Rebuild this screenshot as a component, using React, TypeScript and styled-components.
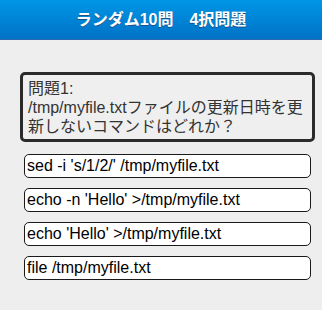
import { FC } from "react";
import styled, { createGlobalStyle } from "styled-components";

const GlobalStyle = createGlobalStyle`
  html, body {
    margin: 0;
    padding: 0;
    background: #eeeeee;
    font-family: "Liberation Sans", Arial, "Noto Sans CJK JP", sans-serif;
  }
`;

const choices = [
  "sed -i 's/1/2/' /tmp/myfile.txt",
  "echo -n 'Hello' >/tmp/myfile.txt",
  "echo 'Hello' >/tmp/myfile.txt",
  "file /tmp/myfile.txt",
];

const App: FC = () => {
  return (
    <Page>
      <GlobalStyle />
      <Header>
        <Title>ランダム10問　4択問題</Title>
      </Header>
      <Content>
        <Question>
          問題1:
          <br />
          /tmp/myfile.txtファイルの更新日時を更新しないコマンドはどれか？
        </Question>
        <ChoiceList>
          {choices.map((c) => (
            <Choice key={c}>{c}</Choice>
          ))}
        </ChoiceList>
      </Content>
    </Page>
  );
};

export default App;

const Page = styled.div`
  width: 322px;
  min-height: 310px;
  background: #eeeeee;
`;

const Header = styled.div`
  height: 39px;
  background: linear-gradient(#0096e6, #0072c6);
  border-bottom: 1px solid #2a6ab0;
  display: flex;
  align-items: center;
  justify-content: center;
`;

const Title = styled.h1`
  margin: 0;
  padding-bottom: 4px;
  font-size: 16px;
  font-weight: bold;
  color: #ffffff;
  text-shadow: 0 1px 0 #1d4f86;
`;

const Content = styled.div`
  padding: 32px 7px 0 20px;
`;

const Question = styled.div`
  border: 3px solid #2b2b2b;
  border-radius: 5px;
  background: #efefef;
  padding: 4px 8px 3px 5px;
  font-size: 16px;
  line-height: 19px;
  color: #333333;
`;

const ChoiceList = styled.div`
  display: flex;
  flex-direction: column;
  gap: 10px;
  margin: 12px 4px 0 4px;
`;

const Choice = styled.div`
  box-sizing: border-box;
  height: 24px;
  border: 1px solid #1a1a1a;
  border-radius: 5px;
  background: #ffffff;
  padding: 0 2px;
  font-size: 16px;
  line-height: 22px;
  color: #000000;
`;
